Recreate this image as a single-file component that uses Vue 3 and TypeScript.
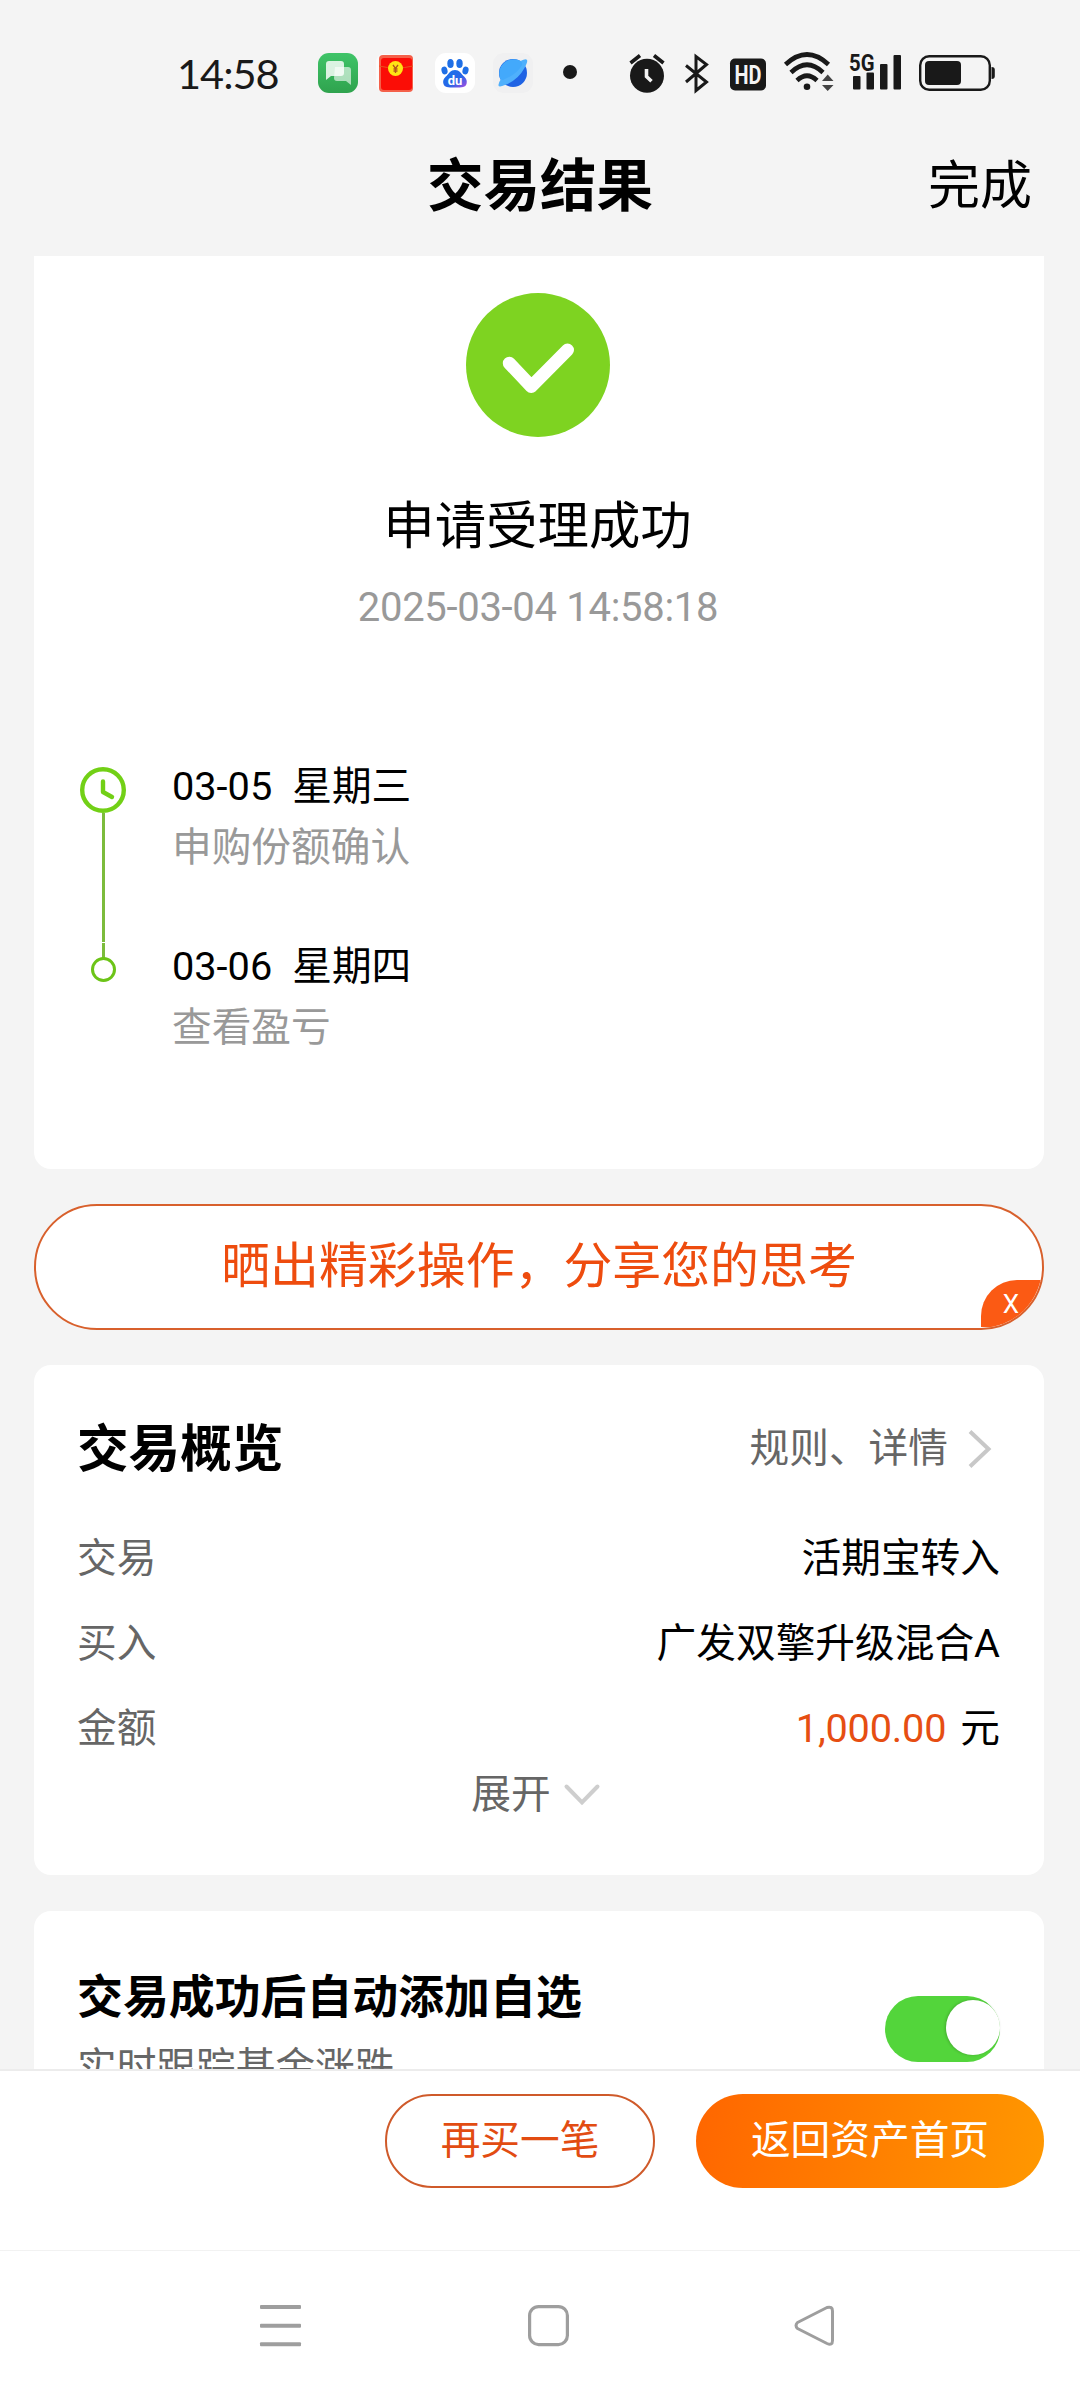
<script setup lang="ts">
interface Step {
  date: string
  weekday: string
  note: string
}

interface Row {
  label: string
  value: string
  amount?: string
}

const steps: Step[] = [
  { date: '03-05', weekday: '星期三', note: '申购份额确认' },
  { date: '03-06', weekday: '星期四', note: '查看盈亏' },
]

const rows: Row[] = [
  { label: '交易', value: '活期宝转入' },
  { label: '买入', value: '广发双擎升级混合A' },
  { label: '金额', value: '元', amount: '1,000.00' },
]
</script>

<template>
  <div class="screen">
    <div class="status">
      <span class="clock">14:58</span>
      <div class="apps">
        <svg width="40" height="40" viewBox="0 0 40 40">
          <defs>
            <linearGradient id="chat" x1="0" y1="0" x2="0" y2="1">
              <stop offset="0" stop-color="#3fc468" />
              <stop offset="1" stop-color="#2fa34e" />
            </linearGradient>
          </defs>
          <rect width="40" height="40" rx="11" fill="url(#chat)" />
          <path d="M17 14h13a3 3 0 0 1 3 3v15l-5-4H19a3 3 0 0 1-3-3z" fill="#fff" opacity=".6" />
          <path d="M11 8h12a3 3 0 0 1 3 3v9a3 3 0 0 1-3 3H13l-5 4V11a3 3 0 0 1 3-3z" fill="#fff" opacity=".82" />
        </svg>
        <svg width="40" height="40" viewBox="0 0 40 40">
          <rect width="38" height="38" x="0" y="1" rx="8" fill="#fbfafa" />
          <rect x="3" y="2" width="34" height="37" rx="4" fill="#f4604a" />
          <rect x="5" y="5" width="31" height="32" rx="3" fill="#fb0d06" />
          <path d="M3 13q17 4 34 0" stroke="#e8541c" fill="none" />
          <circle cx="19.500" cy="15.500" r="7.500" fill="#ffe414" />
          <path d="M17 12l2.500 3.500L22 12M19.500 15.500V20M17.500 16h4M17.500 18h4" stroke="#b3541c" stroke-width="1.300" fill="none" />
        </svg>
        <svg width="40" height="40" viewBox="0 0 40 40">
          <defs>
            <linearGradient id="paw" x1="0" y1="0" x2="1" y2="1">
              <stop offset="0" stop-color="#1673ea" />
              <stop offset=".6" stop-color="#2a66e8" />
              <stop offset="1" stop-color="#b04be0" />
            </linearGradient>
          </defs>
          <rect width="40" height="40" rx="11" fill="#fff" />
          <g fill="#1f6fe6">
            <ellipse cx="15.500" cy="10.500" rx="3.200" ry="4.500" />
            <ellipse cx="24.500" cy="10.500" rx="3.200" ry="4.500" />
            <ellipse cx="9.500" cy="17.500" rx="3" ry="4" transform="rotate(-15 9.500 17.500)" />
            <ellipse cx="30.500" cy="17.500" rx="3" ry="4" transform="rotate(15 30.500 17.500)" />
          </g>
          <path d="M20 17c4.500 0 6 3.500 8.500 6 2.500 2.300 4 4.500 3 8-1 3.300-4 3.500-11.500 3.500S9.500 34.300 8.500 31c-1-3.500.500-5.700 3-8 2.500-2.500 4-6 8.500-6z" fill="url(#paw)" />
          <text x="20" y="31.500" text-anchor="middle" font-size="13" font-weight="700" fill="#fff">du</text>
        </svg>
        <svg width="40" height="40" viewBox="0 0 40 40">
          <rect width="40" height="40" rx="11" fill="#f0f0f1" />
          <circle cx="20" cy="20" r="14" fill="#1f63e4" />
          <path d="M32 12A14 14 0 1 0 9 29Q24 25 32 12z" fill="#43a9fb" />
          <path d="M27.500 8Q33 5 34 7t-2.500 8Q25 27 12 32q-6 2.500-6.500.500T8 26q1 2 4 0 12-5 17-14 1-2-1.500-4z" fill="#4fb0fc" />
        </svg>
      </div>
      <span class="dot"></span>
      <div class="system">
        <svg width="36" height="40" viewBox="629 53 36 40" fill="none">
          <circle cx="647" cy="75.700" r="17" fill="#191919" />
          <path d="M630.500 63l9.500-7.500M663.500 63l-9.500-7.500" stroke="#191919" stroke-width="3.600" />
          <path d="M646.500 69v7.500l5 4.700" stroke="#f4f4f4" stroke-width="3.600" />
        </svg>
        <svg class="bt" width="24" height="40" viewBox="685 53 24 40" fill="none">
          <path d="M686 65.500l20.500 16.500-10.500 8.500V56.500l10.500 8L686 82" stroke="#191919" stroke-width="3" />
        </svg>
        <svg class="hd" width="36" height="40" viewBox="730 53 36 40">
          <rect x="730" y="58.500" width="36" height="32" rx="5" fill="#191919" />
          <text x="748" y="83.500" text-anchor="middle" font-size="25" font-weight="700" fill="#f4f4f4" textLength="27" lengthAdjust="spacingAndGlyphs">HD</text>
        </svg>
        <svg class="wifi" width="50" height="44" viewBox="784 49 50 44" fill="none">
          <path d="M785.500 64.500Q807 44.500 828.500 64.500M791 72.500Q807 57 823 72.500M797 80.500Q807 71 817 80.500" stroke="#191919" stroke-width="4.600" />
          <circle cx="807" cy="86.700" r="3.300" fill="#191919" />
          <path d="M822 81l5.700-6.500L833.500 81zM822 85l5.700 6 5.800-6z" fill="#444" />
        </svg>
        <svg class="signal" width="53" height="48" viewBox="849 45 53 48" fill="#191919">
          <rect x="853" y="76" width="7.500" height="13.500" rx="1" />
          <rect x="866.500" y="72.500" width="7.500" height="17" rx="1" />
          <rect x="880" y="64" width="7.500" height="25.500" rx="1" />
          <rect x="893.500" y="55" width="7.500" height="34.500" rx="1" />
          <text x="849" y="70.500" font-size="24" font-weight="700" textLength="25.500" lengthAdjust="spacingAndGlyphs">5G</text>
        </svg>
        <svg class="battery" width="78" height="40" viewBox="918 53 78 40">
          <rect x="920.200" y="56.200" width="69.600" height="33.600" rx="9" fill="none" stroke="#191919" stroke-width="2.400" />
          <rect x="925" y="61" width="36" height="24" rx="4" fill="#191919" />
          <path d="M991.500 67c2.500 0 3.300 1 3.300 3v6c0 2-.800 3-3.300 3z" fill="#191919" />
        </svg>
      </div>
    </div>

    <header class="titlebar">
      <span></span>
      <h1>交易结果</h1>
      <span class="done">完成</span>
    </header>

    <main class="content">
      <section class="card result">
        <svg class="success" width="144" height="144" viewBox="0 0 144 144" fill="none">
          <circle cx="72" cy="72" r="72" fill="#7ed321" />
          <path d="M43.300 70.200L65.300 93.500 101.500 57" stroke="#fff" stroke-width="13" stroke-linecap="round" stroke-linejoin="round" />
        </svg>
        <h2>申请受理成功</h2>
        <time>2025-03-04 14:58:18</time>
        <div class="timeline">
          <div class="rail">
            <svg width="46" height="46" viewBox="0 0 46 46" fill="none" stroke="#72d016">
              <circle cx="23" cy="23" r="20.800" stroke-width="4.400" />
              <path d="M23 14.500V25l9 5" stroke-width="4.400" stroke-linecap="round" stroke-linejoin="round" />
            </svg>
            <span class="line first"></span>
            <span class="line last"></span>
            <span class="node"></span>
          </div>
          <ul>
            <li v-for="s in steps" :key="s.date">
              <p class="day"><span>{{ s.date }}</span><span>{{ s.weekday }}</span></p>
              <p class="note">{{ s.note }}</p>
            </li>
          </ul>
        </div>
      </section>

      <section class="share">
        <span>晒出精彩操作，分享您的思考</span>
        <i class="close">X</i>
      </section>

      <section class="card overview">
        <div class="overview-head">
          <h3>交易概览</h3>
          <span class="rules">规则、详情
            <svg width="24" height="40" viewBox="0 0 24 40" fill="none" stroke="#c8c8c8" stroke-width="4">
              <path d="M2 2.500L20.500 20 2 37.500" />
            </svg>
          </span>
        </div>
        <div v-for="r in rows" :key="r.label" class="row">
          <span class="label">{{ r.label }}</span>
          <span class="value"><em v-if="r.amount">{{ r.amount }}</em>{{ r.value }}</span>
        </div>
        <div class="expand">
          <span>展开</span>
          <svg width="36" height="22" viewBox="0 0 36 22" fill="none" stroke="#cecece" stroke-width="4" stroke-linecap="round">
            <path d="M2.500 2.500L18 18.500 33.500 2.500" />
          </svg>
        </div>
      </section>

      <section class="card follow">
        <div>
          <h4>交易成功后自动添加自选</h4>
          <p>实时跟踪基金涨跌</p>
        </div>
        <span class="toggle"><i></i></span>
      </section>
    </main>

    <footer class="actions">
      <button class="outline">再买一笔</button>
      <button class="solid">返回资产首页</button>
    </footer>

    <nav class="sysnav">
      <svg width="41" height="42" viewBox="0 0 41 42" fill="#9e9e9e">
        <rect y="0" width="41" height="4" rx="1" />
        <rect y="18.700" width="41" height="4" rx="1" />
        <rect y="37.300" width="41" height="4" rx="1" />
      </svg>
      <svg class="home" width="41" height="42" viewBox="0 0 41 42" fill="none">
        <rect x="1.600" y="1.600" width="37.800" height="38" rx="9" stroke="#9e9e9e" stroke-width="3.200" />
      </svg>
      <svg width="41" height="42" viewBox="0 0 41 42" fill="none" stroke="#9e9e9e" stroke-width="3" stroke-linejoin="round">
        <path d="M3.500 17.500L33 2.500Q38.500 1 38.500 6V35.500Q38.500 41 33 38.500L3.500 23.500Q.500 20.500 3.500 17.500z" />
      </svg>
    </nav>
  </div>
</template>

<style>
body {
  background: #f4f4f4;
}
</style>

<style scoped>
* {
  box-sizing: border-box;
  margin: 0;
  padding: 0;
}
svg {
  display: block;
  flex: none;
  overflow: visible;
}
.screen {
  width: 1080px;
  height: 2400px;
  display: flex;
  flex-direction: column;
  overflow: hidden;
  background: #f4f4f4;
  color: #000;
  font-family: Roboto, "Noto Sans CJK SC", sans-serif;
  font-size: 39.7px;
  line-height: 60px;
}
.status {
  height: 128px;
  padding: 18px 84px 0 177px;
  display: flex;
  align-items: center;
  flex: none;
}
.clock {
  width: 141px;
  font-family: Lato, sans-serif;
  font-size: 41.5px;
  letter-spacing: -1px;
  color: #191919;
}
.apps {
  display: flex;
  gap: 18.3px;
}
.dot {
  width: 14px;
  height: 14px;
  margin-left: 37px;
  border-radius: 50%;
  background: #191919;
  margin: 0 0 2px 30px;
}
.system {
  margin-left: auto;
  display: flex;
  align-items: flex-end;
}
.bt { margin-left: 20px; }
.hd { margin-left: 21px; }
.wifi { margin-left: 18px; }
.signal { margin-left: 15px; }
.battery { margin-left: 16px; }
.status .system {
  height: 40px;
}
.titlebar {
  height: 128px;
  padding: 19px 48px 0;
  display: grid;
  grid-template-columns: 1fr auto 1fr;
  flex: none;
  line-height: 80px;
}
.titlebar h1 {
  font-size: 56.5px;
}
.done {
  font-size: 52px;
  text-align: right;
}
.content {
  height: 1813px;
  padding: 0 36px 0 34px;
  overflow: hidden;
  flex: none;
}
.card {
  background: #fff;
  border-radius: 17px;
}
.result {
  height: 913px;
  padding-top: 37px;
  border-radius: 0 0 17px 17px;
  display: flex;
  flex-direction: column;
  align-items: center;
}
.success {
  margin-right: 2px;
}
.result h2 {
  margin: 55px 3px 0 0;
  font-size: 51.4px;
  font-weight: 400;
  line-height: 70px;
}
.result time {
  margin: 16px 2px 0 0;
  font-size: 40px;
  letter-spacing: -0.3px;
  color: #999;
}
.timeline {
  width: 100%;
  margin-top: 119px;
  padding-left: 46px;
  display: flex;
  gap: 46px;
}
.rail {
  width: 46px;
  padding-top: 10px;
  display: flex;
  flex-direction: column;
  align-items: center;
}
.line {
  width: 3px;
  background: #7cbc3c;
}
.line.first { height: 129px; }
.line.last { height: 15px; margin-top: 1px; }
.node {
  width: 25px;
  height: 25px;
  margin-top: -1px;
  border: 3px solid #6cc417;
  border-radius: 50%;
}
.timeline ul {
  list-style: none;
  display: flex;
  flex-direction: column;
  gap: 59px;
}
.day {
  display: flex;
  gap: 20px;
}
.note {
  margin-top: 1px;
  color: #999;
}
.share {
  position: relative;
  height: 126px;
  margin-top: 35px;
  border: 2px solid #d8602c;
  border-radius: 63px;
  background: #fff;
  display: flex;
  align-items: center;
  justify-content: center;
  overflow: hidden;
  color: #ee4c0e;
  font-size: 48.9px;
}
.close {
  position: absolute;
  right: 0;
  bottom: 1px;
  width: 61px;
  height: 47px;
  padding-right: 1px;
  border-top-left-radius: 36px;
  background: #fb5a14;
  color: #fff;
  font-size: 26px;
  font-style: normal;
  line-height: 48px;
  text-align: center;
}
.overview {
  height: 510px;
  margin-top: 35px;
  padding: 49px 44px 0 43px;
}
.overview-head {
  display: flex;
  justify-content: space-between;
  height: 115px;
  line-height: 72px;
}
.overview-head h3 {
  font-size: 51.6px;
}
.rules {
  display: flex;
  align-items: center;
  gap: 20px;
  height: 70px;
  margin-right: 8px;
  color: #666;
}
.row {
  height: 85px;
  display: flex;
  justify-content: space-between;
}
.label {
  color: #666;
}
.value em {
  margin-right: 14px;
  color: #e64e12;
  font-style: normal;
  letter-spacing: -0.2px;
}
.expand {
  margin: -19px 6px 0 0;
  display: flex;
  justify-content: center;
  align-items: center;
  gap: 13px;
  color: #666;
}
.follow {
  height: 300px;
  margin-top: 36px;
  padding: 53px 44px 0 43px;
  display: flex;
  justify-content: space-between;
}
.follow h4 {
  font-size: 45.9px;
  line-height: 66px;
}
.follow p {
  margin-top: 8px;
  color: #666;
}
.toggle {
  width: 115px;
  height: 66px;
  margin-top: 32px;
  padding-top: 4px;
  border-radius: 33px;
  background: #53d53b;
  display: flex;
  justify-content: flex-end;
}
.toggle i {
  width: 54px;
  height: 55px;
  border-radius: 50%;
  background: #fff;
  box-shadow: -1px 0 3px rgba(0, 0, 0, 0.2);
}
.actions {
  height: 181px;
  padding: 23px 36px 0 0;
  border-top: 2px solid #ececec;
  background: #fff;
  display: flex;
  justify-content: flex-end;
  gap: 41px;
  flex: none;
}
.actions button {
  height: 94px;
  border: 0;
  border-radius: 47px;
  font: inherit;
}
.actions .outline {
  width: 270px;
  border: 2px solid #cf5a2a;
  background: #fff;
  color: #e24c12;
}
.actions .solid {
  width: 348px;
  background: linear-gradient(100deg, #ff6600, #ff9800);
  color: #fff;
}
.sysnav {
  height: 150px;
  padding: 54px 245px 0 260px;
  border-top: 1px solid #f2f2f2;
  background: #fff;
  display: flex;
  justify-content: space-between;
  flex: none;
}
.home {
  margin-left: 2px;
}
</style>
